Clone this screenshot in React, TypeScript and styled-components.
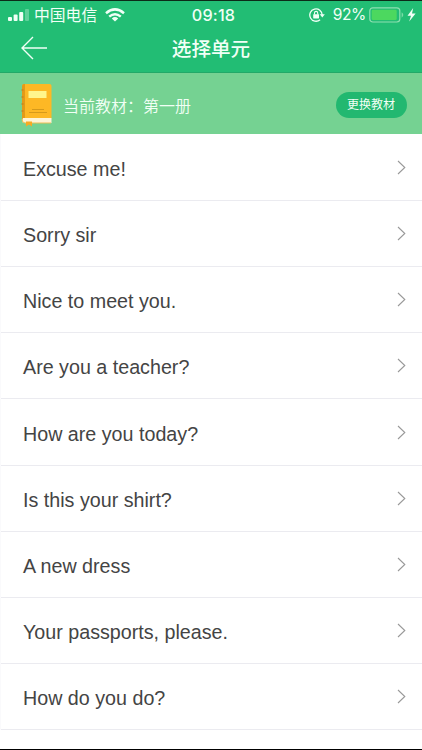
import React from "react";
import styled, { createGlobalStyle } from "styled-components";

const cjk = '"Noto Sans CJK SC", sans-serif';
const latin = '"Liberation Sans", Arial, sans-serif';

const GlobalStyle = createGlobalStyle`
  * { box-sizing: border-box; }
  body { margin: 0; background: #fff; }
`;

const Screen = styled.main`
  display: flex;
  flex-direction: column;
  width: 422px;
  height: 750px;
  overflow: hidden;
  background: #fff;
  border-top: 1px solid #0c2a18;
  border-bottom: 1px solid #000;
`;

const Header = styled.header`
  height: 72px;
  flex: none;
  background: #22bd74;
  border-bottom: 1px solid #22a968;
  color: #f0fff6;
`;

const StatusBar = styled.div`
  display: grid;
  grid-template-columns: 1fr auto 1fr;
  align-items: center;
  height: 27px;
  padding: 0 6px 0 8px;
`;

const StatusGroup = styled.div<{ $end?: boolean }>`
  display: flex;
  align-items: center;
  justify-content: ${(p) => (p.$end ? "flex-end" : "flex-start")};
  svg { flex: none; display: block; }
`;

const Carrier = styled.span`
  margin: 0 8px 0 4px;
  font: 400 15.8px/20px ${cjk};
`;

const Clock = styled.span`
  padding-left: 3px;
  font: 500 16.2px/20px Inter, ${latin};
  letter-spacing: 0.2px;
`;

const Percent = styled.span`
  margin: 0 3px 0 8px;
  font: 400 15.6px/20px Inter, ${latin};
  letter-spacing: -0.4px;
`;

const NavBar = styled.div`
  display: grid;
  grid-template-columns: 60px 1fr 60px;
  align-items: center;
  height: 40px;
`;

const BackButton = styled.button`
  display: flex;
  padding: 0 0 0 21px;
  border: 0;
  background: none;
  color: inherit;
`;

const Title = styled.h1`
  margin: 0;
  text-align: center;
  font: 500 19.6px/28px ${cjk};
`;

const Banner = styled.section`
  display: flex;
  align-items: center;
  flex: none;
  height: 61px;
  padding: 0 15px 0 21px;
  background: #75d292;
  color: #f1fff5;
`;

const BookName = styled.p`
  flex: 1;
  margin: 2px 0 0 11px;
  font: 350 16px/24px ${cjk};
`;

const ChangeButton = styled.button`
  width: 71px;
  height: 26px;
  margin-top: 2px;
  padding: 0 1px 2px 0;
  border: 0;
  border-radius: 13px;
  background: #22b870;
  color: #f1fff5;
  font: 400 12px/24px ${cjk};
`;

const UnitList = styled.ul`
  margin: 0;
  padding: 1px 0 0;
  list-style: none;
  border-left: 1px solid #fafafc;
`;

const UnitRow = styled.li`
  display: flex;
  align-items: center;
  justify-content: space-between;
  height: 66.12px;
  padding: 3.2px 16px 0 22px;
  border-bottom: 1px solid #ebebf0;
  color: #444;
  font: 400 19.7px/28px ${latin};
  svg { margin-top: -3px; }
`;

const Signal = () => (
  <svg width="22" height="14" viewBox="0 0 22 14" fill="currentColor">
    <rect x="0" y="9" width="4" height="4" rx="1" />
    <rect x="5.6" y="6.5" width="4" height="6.5" rx="1" />
    <rect x="11.2" y="4" width="4" height="9" rx="1" />
    <rect x="17" y="1" width="4" height="12" rx="1" opacity=".3" />
  </svg>
);

const Wifi = () => (
  <svg width="20" height="14" viewBox="0 0 20 14" fill="none" stroke="currentColor" strokeWidth="2.5">
    <path d="M1 5.2Q10 -2.4 19 5.2M4.2 8.6Q10 3.8 15.8 8.6" />
    <path d="M6.8 10.4Q10 7.8 13.2 10.4L10 13.6Z" fill="currentColor" stroke="none" />
  </svg>
);

const RotationLock = () => (
  <svg width="16" height="14" viewBox="0 0 16 14" fill="none" stroke="currentColor">
    <path d="M11.1 11.7A6.2 6.2 0 1 1 13.2 7" strokeWidth="1.3" />
    <path d="M10.7 6.2H15.8L13.3 9.5Z" fill="currentColor" stroke="none" />
    <rect x="4.2" y="6.2" width="5.8" height="4.3" rx=".4" fill="currentColor" stroke="none" />
    <path d="M5.5 6.5V5a1.6 1.6 0 0 1 3.2 0v1.5" strokeWidth="1.1" />
  </svg>
);

const Battery = () => (
  <svg width="38" height="16" viewBox="0 0 38 16" fill="none">
    <rect x=".8" y=".8" width="30" height="14.2" rx="3" stroke="#8de0b1" strokeWidth="1.2" />
    <rect x="2.7" y="2.7" width="25" height="10.4" rx="1.4" fill="#4cd85f" />
    <path d="M32.6 5.3Q36 8 32.6 10.7Z" fill="#7bdca6" />
  </svg>
);

const Bolt = () => (
  <svg width="9" height="14" viewBox="0 0 9 14" fill="currentColor">
    <path d="M6.2 0L.5 7.8H4L2.2 13.5L8.6 5.5H5Z" />
  </svg>
);

const BackArrow = () => (
  <svg width="27" height="24" viewBox="0 0 27 24" fill="none" stroke="currentColor" strokeWidth="1.4">
    <path d="M12 1L1 12L12 23M1 12H26" />
  </svg>
);

const BookIcon = styled.svg`
  flex: none;
  margin-top: 3px;
`;

const Book = () => (
  <BookIcon width="31" height="43" viewBox="0 0 31 43">
    <path d="M3 0H28.5Q30.5 0 30.5 2V35H1V3Q1 0 3 0Z" fill="#fdb825" />
    <path d="M3 0H4V35H1V3Q1 0 3 0Z" fill="#e39a18" />
    <path d="M.5 6H2.5M.5 13H2.5M.5 20H2.5M.5 27H2.5" stroke="#c38626" strokeWidth="1.6" />
    <path d="M2 34H30.5V39H4Q1 39 1 36.5Z" fill="#fff4d6" />
    <path d="M1 35Q1 39 4 39H30" fill="none" stroke="#eebd54" strokeWidth="1" />
    <path d="M5 37.5H11V42.5L8 40.5L5 42.5Z" fill="#f8aa22" />
    <rect x="7.5" y="7" width="18" height="7" fill="#fff58c" />
    <path d="M11 25.5H23M8 28.5H26" stroke="#d59a1b" strokeWidth="1" />
  </BookIcon>
);

const Chevron = () => (
  <svg width="9" height="15" viewBox="0 0 9 15" fill="none" stroke="#999" strokeWidth="1.1">
    <path d="M1 1L7.8 7.5L1 14" />
  </svg>
);

const units = [
  "Excuse me!",
  "Sorry sir",
  "Nice to meet you.",
  "Are you a teacher?",
  "How are you today?",
  "Is this your shirt?",
  "A new dress",
  "Your passports, please.",
  "How do you do?",
];

export default function App() {
  return (
    <>
      <GlobalStyle />
      <Screen>
        <Header>
          <StatusBar>
            <StatusGroup>
              <Signal />
              <Carrier>中国电信</Carrier>
              <Wifi />
            </StatusGroup>
            <Clock>09:18</Clock>
            <StatusGroup $end>
              <RotationLock />
              <Percent>92%</Percent>
              <Battery />
              <Bolt />
            </StatusGroup>
          </StatusBar>
          <NavBar>
            <BackButton aria-label="返回">
              <BackArrow />
            </BackButton>
            <Title>选择单元</Title>
          </NavBar>
        </Header>
        <Banner>
          <Book />
          <BookName>当前教材：第一册</BookName>
          <ChangeButton>更换教材</ChangeButton>
        </Banner>
        <UnitList>
          {units.map((unit) => (
            <UnitRow key={unit}>
              {unit}
              <Chevron />
            </UnitRow>
          ))}
        </UnitList>
      </Screen>
    </>
  );
}
